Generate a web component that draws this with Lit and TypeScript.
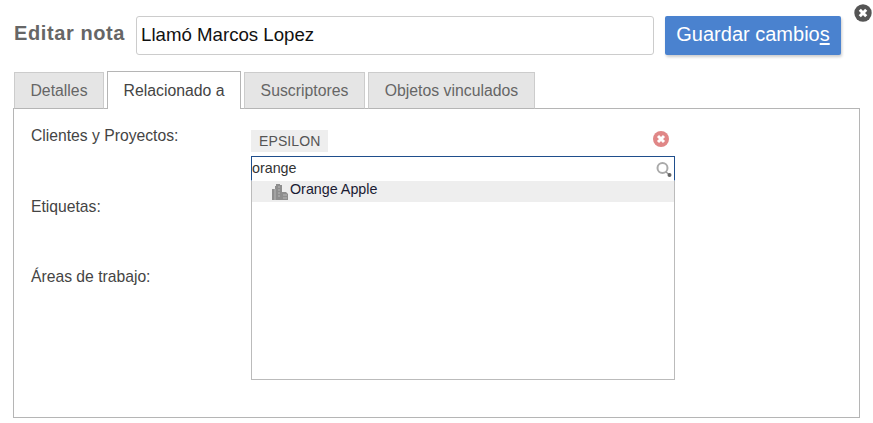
import { LitElement, html, css } from "lit";
import { customElement } from "lit/decorators.js";

@customElement("app-root")
export class AppRoot extends LitElement {
  static styles = css`
    :host { display: block; width: 873px; height: 423px; background: #fff; font-family: "Liberation Sans", Arial, sans-serif; position: relative; overflow: hidden; }
    .head { display: flex; align-items: center; padding: 16px 0 0 14px; height: 39px; box-sizing: content-box; }
    .title { font-size: 20px; font-weight: bold; color: #666; width: 122px; letter-spacing: 0.6px; position: relative; top: -2px; }
    .name { box-sizing: border-box; width: 518px; height: 39px; border: 1px solid #ccc; border-radius: 3px; padding: 0 4px; font-size: 18.67px; line-height: 36px; color: #111; }
    .save { box-sizing: border-box; margin-left: 11px; width: 176px; height: 39px; background: #4a82cf; color: #fff; font-size: 20px; line-height: 37px; text-align: center; border-radius: 2px; box-shadow: 1px 2px 3px rgba(0,0,0,.2); }
    .save u { text-underline-offset: 2px; }
    .close { position: absolute; left: 854px; top: 4px; width: 18px; height: 18px; }
    .tabs { display: flex; gap: 3px; margin: 16px 0 0 14px; height: 38px; position: relative; z-index: 1; }
    .tab { box-sizing: border-box; height: 37px; margin-top: 1px; border: 1px solid #ccc; border-bottom: 1px solid #b5b5b5; background: #e5e5e5; color: #666; font-size: 15.8px; line-height: 35px; text-align: center; }
    .tab.active { height: 38px; margin-top: 0; background: #fff; color: #444; border-color: #b5b5b5; border-bottom: none; line-height: 37px; }
    .panel { box-sizing: border-box; margin: -1px 0 0 13px; width: 847px; height: 310px; border: 1px solid #b5b5b5; display: grid; grid-template-columns: 237px 424px; padding-top: 17px; }
    .labels { display: flex; flex-direction: column; padding-left: 17px; font-size: 15.7px; color: #444; line-height: 20px; }
    .labels div:nth-child(1) { height: 71px; }
    .labels div:nth-child(2) { height: 70px; }
    .right { display: flex; flex-direction: column; }
    .chip-row { display: flex; align-items: flex-start; justify-content: space-between; height: 30px; }
    .chip { background: #eee; color: #555; font-size: 14px; letter-spacing: 0.1px; line-height: 22px; height: 22px; width: 77px; box-sizing: border-box; padding-left: 8px; margin-top: 4px; }
    .del { width: 16px; height: 16px; margin-right: 6px; margin-top: 5px; }
    .search { box-sizing: border-box; height: 25px; border: 1px solid #1f4e8c; border-bottom-color: transparent; font-size: 14.3px; line-height: 23px; color: #333; display: flex; justify-content: space-between; align-items: center; }
    .search svg { margin-right: 1px; }
    .list { box-sizing: border-box; height: 199px; border: 1px solid #bbb; border-top: none; }
    .item { height: 21px; background: #eee; display: flex; align-items: flex-start; padding-left: 19px; font-size: 14.3px; line-height: 16px; color: #1a1a33; }
    .item svg { margin-top: 2px; margin-right: 1px; }
  `;

  render() {
    return html`
      <div class="head">
        <div class="title">Editar nota</div>
        <div class="name">Llamó Marcos Lopez</div>
        <div class="save">Guardar cambio<u>s</u></div>
      </div>
      <svg class="close" viewBox="0 0 18 18">
        <circle cx="9" cy="9" r="8.7" fill="#555"/>
        <path d="M5.8 5.8L12.2 12.2M12.2 5.8L5.8 12.2" stroke="#fff" stroke-width="3"/>
      </svg>
      <div class="tabs">
        <div class="tab" style="width:90px">Detalles</div>
        <div class="tab active" style="width:134px">Relacionado a</div>
        <div class="tab" style="width:121px">Suscriptores</div>
        <div class="tab" style="width:167px">Objetos vinculados</div>
      </div>
      <div class="panel">
        <div class="labels">
          <div>Clientes y Proyectos:</div>
          <div>Etiquetas:</div>
          <div>Áreas de trabajo:</div>
        </div>
        <div class="right">
          <div class="chip-row">
            <div class="chip">EPSILON</div>
            <svg class="del" viewBox="0 0 16 16">
              <circle cx="8" cy="8" r="8" fill="#e08787"/>
              <path d="M5 5L11 11M11 5L5 11" stroke="#fff" stroke-width="3"/>
            </svg>
          </div>
          <div class="search">
            <span>orange</span>
            <svg width="18" height="18" viewBox="0 0 18 18" fill="none">
              <circle cx="7.5" cy="8" r="5" stroke="#aaa" stroke-width="2"/>
              <path d="M11 12L13.5 14" stroke="#999" stroke-width="1.5"/>
              <circle cx="14.5" cy="15" r="2" fill="#666"/>
            </svg>
          </div>
          <div class="list">
            <div class="item">
              <svg width="18" height="18" viewBox="0 0 18 18" fill="#8e8e8e">
                <path d="M1 17V6h3V3h1V1h4v1h2v7h4l2 2v6z"/>
                <path d="M4 6v11M7 4h2M7 7h2M7 10h2M7 13h2M12 12h4M12 15h4" stroke="#b8b8b8" stroke-width="1"/>
              </svg>
              <span>Orange Apple</span>
            </div>
          </div>
        </div>
      </div>
    `;
  }
}
